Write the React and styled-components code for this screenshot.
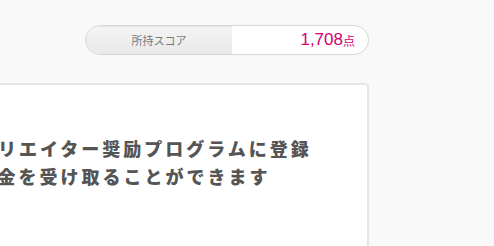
import styled, { createGlobalStyle } from "styled-components";

const GlobalStyle = createGlobalStyle`
	html, body {
		margin: 0;
		padding: 0;
		background-color: #f9f9f9;
		font-family: "Liberation Sans", "Noto Sans CJK JP", sans-serif;
		overflow: hidden;
	}
`;

const Page = styled.div`
	display: flex;
	justify-content: flex-end;
	width: 494px;
	height: 246px;
	padding-right: 125px;
	box-sizing: border-box;
	overflow: hidden;
`;

const Main = styled.main`
	flex-shrink: 0;
	width: 497px;
	display: flex;
	flex-direction: column;
	align-items: flex-end;
	padding-top: 25px;
`;

const ScorePill = styled.div`
	flex-shrink: 0;
	display: flex;
	width: 284px;
	height: 30px;
	box-sizing: border-box;
	border: 1px solid #d6d6d6;
	border-radius: 15px;
	overflow: hidden;
	background: #fff;
`;

const ScoreLabel = styled.div`
	width: 146px;
	display: flex;
	align-items: center;
	justify-content: center;
	background: linear-gradient(to bottom, #f4f4f4, #e9e9e9);
	box-shadow: inset 1px 1px 2px rgba(0, 0, 0, 0.06);
	color: #777;
	font-size: 11px;
	font-family: "Noto Sans CJK JP", sans-serif;
`;

const ScoreValue = styled.div`
	flex: 1;
	display: flex;
	align-items: center;
	justify-content: flex-end;
	padding-right: 13px;
	color: #d4006f;
	font-size: 17px;
	span {
		font-size: 12px;
		font-family: "Noto Sans CJK JP", sans-serif;
	}
`;

const Card = styled.section`
	flex-shrink: 0;
	align-self: stretch;
	margin-top: 28px;
	background: #fff;
	border: 2px solid #e6e6e6;
	border-radius: 4px;
	padding: 49px 40px 40px;
	height: 200px;
`;

const Lead = styled.p`
	margin: 0;
	color: #555;
	font-family: "Noto Sans CJK JP", sans-serif;
	font-weight: 900;
	font-size: 18px;
	line-height: 28px;
	letter-spacing: 3px;
	white-space: nowrap;
`;

export default function App() {
	return (
		<>
			<GlobalStyle />
			<Page>
				<Main>
					<ScorePill>
						<ScoreLabel>所持スコア</ScoreLabel>
						<ScoreValue>
							1,708<span>点</span>
						</ScoreValue>
					</ScorePill>
					<Card>
						<Lead>
							今すぐクリエイター奨励プログラムに登録
							<br />
							して奨励金を受け取ることができます
						</Lead>
					</Card>
				</Main>
			</Page>
		</>
	);
}
